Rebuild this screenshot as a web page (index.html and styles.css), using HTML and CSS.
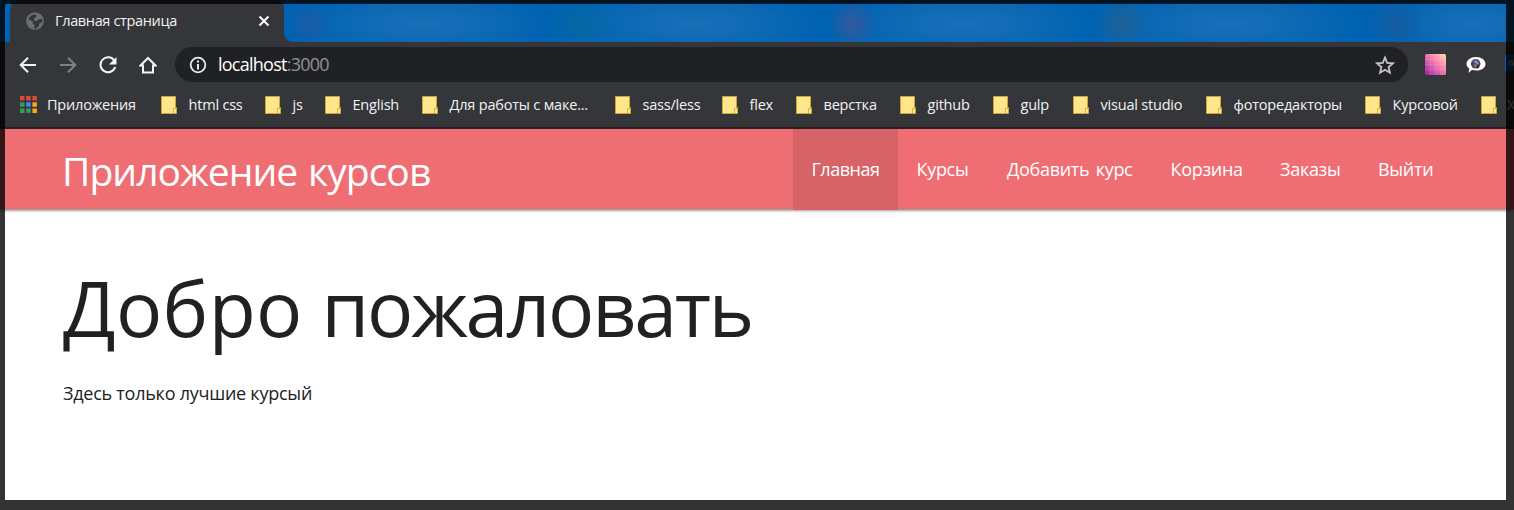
FILE: index.html
```html
<!DOCTYPE html>
<html lang="ru">
<head>
<meta charset="utf-8">
<title>Главная страница</title>
<link rel="stylesheet" href="styles.css">
</head>
<body>
<svg class="defs" width="0" height="0">
  <symbol id="folder" viewBox="0 0 16 18"><path d="M.5.5h14v11h1v6H.5z" fill="#ffe68d" stroke="#c9a63a"/><path d="M12.500 17v-4.500h2.500" fill="none" stroke="#d9b53f"/></symbol>
</svg>
<div class="window">
  <header class="browser">
    <div class="tabs">
      <div class="tab">
        <svg width="18" height="18" viewBox="0 0 18 18"><circle cx="9" cy="9" r="8.800" fill="#6b6e72"/><path d="M3 5.500 6 3l4-.5.5 2L8 6.500v2l3 .5 2-2h3l.3 3-3 1.500-.3 2.500-3 2.500-2-.2.500-3-2-2-4-2z" fill="#353639"/><path d="M2 6.500 7 10l-1 3.500-2-1z" fill="#6b6e72"/></svg>
        <span class="tab-title">Главная страница</span>
        <svg class="close" width="12" height="12" viewBox="0 0 12 12"><path d="m1.500 1.500 9 9m0-9-9 9" stroke="#fff" stroke-width="2"/></svg>
      </div>
      <div class="strip"></div>
    </div>
    <div class="toolbar">
      <svg width="18" height="18" viewBox="0 0 18 18" fill="none" stroke="#f1f3f4" stroke-width="2"><path d="M17 9H2M9 1.700 1.700 9 9 16.300"/></svg>
      <svg width="18" height="18" viewBox="0 0 18 18" fill="none" stroke="#7e8083" stroke-width="2"><path d="M1 9h15M9 1.700 16.300 9 9 16.300"/></svg>
      <svg width="18" height="18" viewBox="0 0 18 18"><path d="M15.300 4.600A7.500 7.500 0 1 0 16.200 11" fill="none" stroke="#f1f3f4" stroke-width="2"/><path d="M17.500 1v7.500H10z" fill="#f1f3f4"/></svg>
      <svg width="18" height="18" viewBox="0 0 18 18"><path d="M1.500 9.500 9 2l7.500 7.500H14V16.500H4V9.500z" fill="none" stroke="#f1f3f4" stroke-width="2"/></svg>
      <div class="omnibox">
        <svg width="18" height="18" viewBox="0 0 18 18"><circle cx="9" cy="9" r="7.300" fill="none" stroke="#e8eaed" stroke-width="1.800"/><path d="M9 4.500v2M9 8v5.500" stroke="#e8eaed" stroke-width="2"/></svg>
        <span class="url">localhost<span class="port">:3000</span></span>
        <svg class="star" width="20" height="20" viewBox="0 0 20 20"><path d="m10 2.500 2.200 5.300 5.800.5-4.400 3.800 1.300 5.600-4.900-3-4.900 3 1.300-5.600L2 8.300l5.800-.5z" fill="none" stroke="#c5c7ca" stroke-width="1.800"/></svg>
      </div>
      <svg class="ext" width="21" height="21" viewBox="0 0 21 21">
        <defs><linearGradient id="pink" x1="0" y1="1" x2="1" y2="0"><stop offset="0" stop-color="#9c1d9e"/><stop offset=".35" stop-color="#d45bb0"/><stop offset=".65" stop-color="#ff8fab"/><stop offset="1" stop-color="#ffdcbc"/></linearGradient></defs>
        <rect width="21" height="21" rx="1.500" fill="url(#pink)"/><path d="M5.500 0v21M10.500 0v21M15.500 0v21M0 5.500h21M0 10.500h21M0 15.500h21" stroke="#fff" stroke-opacity=".1"/>
      </svg>
      <svg class="chat" width="20" height="18" viewBox="0 0 20 18"><path d="M10 1c5.300 0 9.500 2.900 9.500 7s-4.200 6.500-9 6.500c-1.800 0-3.200-.2-4.500-.7L2.500 17l.8-4.600C1.500 11.200.5 9.700.5 8 .5 3.900 4.700 1 10 1z" fill="#fff"/><circle cx="9.700" cy="7.800" r="4.800" fill="#41456b"/><path d="M7 5.500 10 4l3 3-1 1.500-3-1.500z" fill="#8b91ad"/><circle cx="9.500" cy="9.500" r="1.800" fill="#9b625d"/><path d="m11 9 2 2-2 1.500" fill="#161727"/></svg>
      <span class="badge">G</span>
    </div>
    <nav class="bookmarks">
      <div class="mark"><svg class="apps" width="17" height="17" viewBox="0 0 17 17"><path d="M0 0h4.500v4.500H0zM6.200 0h4.500v4.500H6.200zM12.400 0h4.500v4.500h-4.500z" fill="#e0463c"/><path d="M0 6.200h4.500v4.500H0zM0 12.400h4.500v4.500H0z" fill="#349b58"/><path d="M6.200 6.200h4.500v4.500H6.200z" fill="#3c8cf0"/><path d="M6.200 12.400h4.500v4.500H6.200z" fill="#349b58"/><path d="M12.400 6.200h4.500v4.500h-4.500zM12.400 12.400h4.500v4.500h-4.500z" fill="#f5a916"/></svg><span>Приложения</span></div>
      <div class="mark"><svg class="folder"><use href="#folder"/></svg><span>html css</span></div>
      <div class="mark"><svg class="folder"><use href="#folder"/></svg><span>js</span></div>
      <div class="mark"><svg class="folder"><use href="#folder"/></svg><span>English</span></div>
      <div class="mark"><svg class="folder"><use href="#folder"/></svg><span>Для работы с маке...</span></div>
      <div class="mark"><svg class="folder"><use href="#folder"/></svg><span>sass/less</span></div>
      <div class="mark"><svg class="folder"><use href="#folder"/></svg><span>flex</span></div>
      <div class="mark"><svg class="folder"><use href="#folder"/></svg><span>верстка</span></div>
      <div class="mark"><svg class="folder"><use href="#folder"/></svg><span>github</span></div>
      <div class="mark"><svg class="folder"><use href="#folder"/></svg><span>gulp</span></div>
      <div class="mark"><svg class="folder"><use href="#folder"/></svg><span>visual studio</span></div>
      <div class="mark"><svg class="folder"><use href="#folder"/></svg><span>фоторедакторы</span></div>
      <div class="mark"><svg class="folder"><use href="#folder"/></svg><span>Курсовой</span></div>
      <div class="mark"><svg class="folder"><use href="#folder"/></svg><span>Х</span></div>
    </nav>
  </header>
  <div class="navbar">
    <div class="brand">Приложение курсов</div>
    <nav class="links">
      <a class="link active">Главная</a><a class="link">Курсы</a><a class="link">Добавить курс</a><a class="link">Корзина</a><a class="link">Заказы</a><a class="link">Выйти</a>
    </nav>
  </div>
  <main class="content">
    <h1 class="heading"><span class="wide">Добро</span> пожаловать</h1>
    <p class="lead">Здесь только лучшие курсый</p>
  </main>
  <div class="shade"></div>
</div>
</body>
</html>
```
FILE: styles.css
```css
* { box-sizing: border-box; }
body { margin: 0; font-family: "Open Sans", "Noto Sans", sans-serif; background: #fff; }
svg { display: block; flex: none; }
.defs { position: absolute; }
.window { position: relative; width: 1514px; height: 510px; overflow: hidden; display: flex; flex-direction: column; }
.browser { flex: none; height: 129px; background: #353639; border-bottom: 2px solid #2e2023; }
.tabs { display: flex; height: 42px; background: #0063b1; }
.tab { width: 274px; margin-left: 10px; height: 42px; background: #353639; border-radius: 10px 10px 0 0; display: flex; align-items: center; padding: 0 14px 0 16px; }
.tab-title { margin-left: 11px; color: #f1f3f4; font-size: 14.5px; line-height: 20px; padding-bottom: 1px; letter-spacing: -.35px; white-space: nowrap; }
.close { margin-left: auto; }
.strip { flex: 1; border-radius: 0 0 0 9px; box-shadow: -5px 5px 0 #353639; background:
  radial-gradient(ellipse 22px 22px at 26px 24px, #1d5ca6, transparent),
  radial-gradient(ellipse 35px 28px at 297px 24px, #0669a4, transparent),
  radial-gradient(ellipse 24px 26px at 568px 24px, #35589a, transparent),
  radial-gradient(ellipse 28px 28px at 838px 24px, #206197, transparent),
  radial-gradient(ellipse 28px 28px at 1112px 24px, #165ca1, transparent),
  radial-gradient(ellipse 130px 36px at 140px 24px, #1b70b8, transparent),
  radial-gradient(ellipse 130px 36px at 410px 24px, #1b70b8, transparent),
  radial-gradient(ellipse 130px 36px at 680px 24px, #1b70b8, transparent),
  radial-gradient(ellipse 130px 36px at 945px 24px, #1b70b8, transparent),
  radial-gradient(ellipse 90px 36px at 1190px 24px, #1b70b8, transparent), #0063b1; }
.toolbar { display: flex; align-items: center; height: 45px; padding-left: 19px; gap: 22px; overflow: hidden; }
.omnibox { flex: none; width: 1233px; height: 35px; margin-left: -4px; border-radius: 18px; background: #202124; display: flex; align-items: center; padding: 0 13px 0 14px; }
.url { margin-left: 11px; color: #fff; font-size: 18px; line-height: 24px; padding-bottom: 1px; letter-spacing: -.75px; }
.port { color: #8f9194; }
.star { margin-left: auto; }
.ext { margin-left: -5px; }
.chat { margin-left: -2px; }
.badge { flex: none; width: 30px; height: 16px; margin: -4px 0 0 -3px; padding-left: 3px; background: #1a56b8; color: #bbb; font-size: 9px; font-weight: 700; line-height: 16px; }
.bookmarks { display: grid; grid-template-columns: 141px 104px 60px 97px 193px 107px 74px 104px 93px 80px 133px 159px 116px 60px; align-items: center; height: 35px; padding-left: 20px; color: #f1f3f4; font-size: 14.5px; letter-spacing: -.2px; white-space: nowrap; }
.mark { display: flex; align-items: center; gap: 11.5px; }
.mark:first-child { gap: 10px; }
.mark:last-child { gap: 10px; }
.folder { width: 16px; height: 18px; }
.navbar { flex: none; display: flex; justify-content: space-between; height: 80px; padding: 0 64px 0 62px; background: #ee6e73; color: #fff; box-shadow: 0 2px 2px rgba(0,0,0,.2), 0 3px 2px -2px rgba(0,0,0,.25), 0 1px 5px rgba(0,0,0,.15); }
.brand { font-size: 39px; line-height: 84px; letter-spacing: -.95px; word-spacing: 1.5px; white-space: nowrap; }
.links { display: grid; grid-template-columns: 105px 90.5px 163.5px 109.5px 98px 90.5px; font-size: 18px; line-height: 81px; letter-spacing: -.3px; word-spacing: 2px; white-space: nowrap; }
.link { padding-left: 18.5px; }
.active { background: #d66367; letter-spacing: -.5px; }
.content { padding: 49px 0 0 63px; color: #212121; }
.heading { margin: 0; font-size: 77px; font-weight: 400; line-height: 100px; letter-spacing: -2.2px; word-spacing: 1px; white-space: nowrap; }
.wide { letter-spacing: .3px; }
.lead { margin: 21px 0 0; font-size: 18px; line-height: 28px; letter-spacing: -.25px; white-space: nowrap; }
.shade { position: absolute; inset: 0; border: solid rgba(0,0,0,.8); border-width: 4px 8px 10px 5px; }
```
